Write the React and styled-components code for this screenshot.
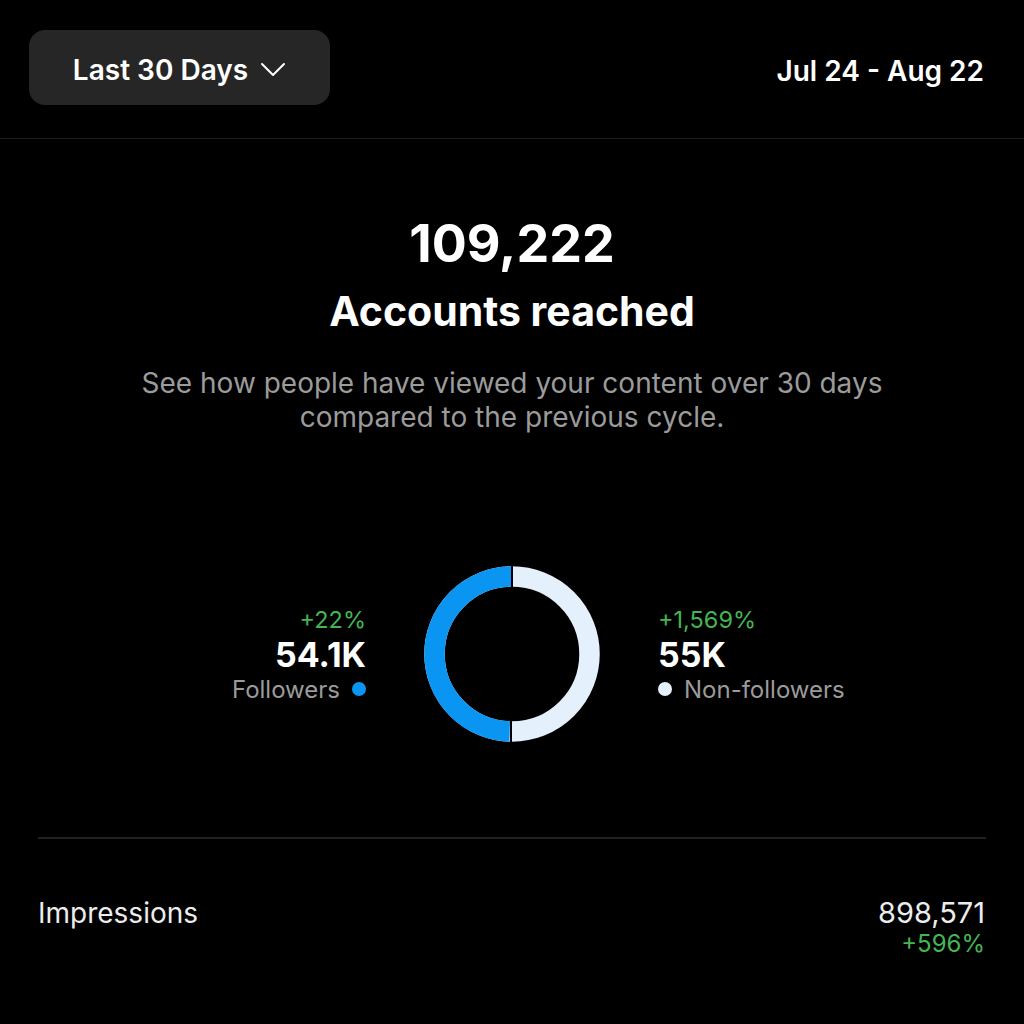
import React from "react"
import styled, { createGlobalStyle } from "styled-components"

const GlobalStyle = createGlobalStyle`
  html, body {
    margin: 0;
    padding: 0;
    background: #000;
  }
  body {
    font-family: Inter, "Noto Sans", "Liberation Sans", sans-serif;
    color: #fff;
  }
`

const Ring = ({ share }) => {
  const r = 77.5
  const c = 2 * Math.PI * r
  const blue = c * share
  return (
    <svg width="176" height="176" viewBox="0 0 176 176">
      <g transform="rotate(-90 88 88)">
        <circle cx="88" cy="88" r={r} fill="none" stroke="#e4f0fc" strokeWidth="20.5" />
        <circle
          cx="88"
          cy="88"
          r={r}
          fill="none"
          stroke="#0a95f2"
          strokeWidth="20.5"
          strokeDasharray={`${blue} ${c}`}
          strokeDashoffset={-(c - blue)}
        />
      </g>
      <line x1="88" y1="0" x2="88" y2="22" stroke="#000" strokeWidth="2" />
      <line x1="87" y1="154" x2="87" y2="176" stroke="#000" strokeWidth="2" />
    </svg>
  )
}

const Chevron = () => (
  <svg width="26" height="15" viewBox="0 0 26 15" fill="none">
    <path d="M2 2l11 11L24 2" stroke="#fff" strokeWidth="2" strokeLinecap="round" strokeLinejoin="round" />
  </svg>
)

const App = () => {
  return (
    <>
      <GlobalStyle />
      <Page>
        <Header>
          <RangeButton>
            Last 30 Days
            <Chevron />
          </RangeButton>
          <DateRange>Jul 24 - Aug 22</DateRange>
        </Header>

        <Hero>
          <BigNumber>109,222</BigNumber>
          <HeroTitle>Accounts reached</HeroTitle>
          <Description>
            See how people have viewed your content over 30 days
            <br />
            compared to the previous cycle.
          </Description>
        </Hero>

        <Breakdown>
          <Stat $side="left">
            <Change>+22%</Change>
            <StatValue>54.1K</StatValue>
            <StatLabel>
              Followers
              <Dot $color="#0a95f2" />
            </StatLabel>
          </Stat>
          <Ring share={0.496} />
          <Stat $side="right">
            <Change>+1,569%</Change>
            <StatValue>55K</StatValue>
            <StatLabel>
              <Dot $color="#e4f0fc" />
              Non-followers
            </StatLabel>
          </Stat>
        </Breakdown>

        <Divider />

        <MetricRow>
          <MetricName>Impressions</MetricName>
          <MetricValues>
            <MetricValue>898,571</MetricValue>
            <MetricChange>+596%</MetricChange>
          </MetricValues>
        </MetricRow>
      </Page>
    </>
  )
}

const Page = styled.div`
  width: 1024px;
  height: 1024px;
  background: #000;
  overflow: hidden;
`

const Header = styled.div`
  height: 139px;
  box-sizing: border-box;
  padding: 30px 40px 0 29px;
  display: flex;
  align-items: flex-start;
  justify-content: space-between;
  border-bottom: 1px solid #1c1c1c;
`

const RangeButton = styled.div`
  width: 301px;
  height: 75px;
  box-sizing: border-box;
  border-radius: 16px;
  background: #262626;
  display: flex;
  align-items: center;
  justify-content: center;
  gap: 12px;
  font-size: 28px;
  font-weight: 600;
  padding-top: 4px;
`

const DateRange = styled.div`
  font-size: 28px;
  font-weight: 600;
  line-height: 75px;
  padding-top: 4px;
`

const Hero = styled.div`
  display: flex;
  flex-direction: column;
  align-items: center;
  text-align: center;
  padding-top: 75px;
`

const BigNumber = styled.div`
  font-size: 52px;
  font-weight: 700;
  line-height: 60px;
`

const HeroTitle = styled.div`
  font-size: 41px;
  font-weight: 700;
  line-height: 48px;
  margin-top: 13px;
`

const Description = styled.div`
  font-size: 28px;
  line-height: 34px;
  color: #9b9b9b;
  margin-top: 31px;
`

const Breakdown = styled.div`
  display: grid;
  grid-template-columns: 1fr auto 1fr;
  align-items: center;
  column-gap: 58px;
  margin-top: 132px;
`

const Stat = styled.div`
  display: flex;
  flex-direction: column;
  align-items: ${(p) => (p.$side === "left" ? "flex-end" : "flex-start")};
`

const Change = styled.div`
  font-size: 23.5px;
  line-height: 35px;
  color: #45b553;
`

const StatValue = styled.div`
  font-size: 34px;
  font-weight: 700;
  line-height: 35px;
`

const StatLabel = styled.div`
  display: flex;
  align-items: center;
  gap: 12px;
  font-size: 24px;
  line-height: 35px;
  color: #9b9b9b;
`

const Dot = styled.span`
  width: 14px;
  height: 14px;
  border-radius: 50%;
  background: ${(p) => p.$color};
`

const Divider = styled.div`
  height: 2px;
  background: #222;
  margin: 95px 38px 0;
`

const MetricRow = styled.div`
  display: flex;
  justify-content: space-between;
  align-items: flex-start;
  padding: 56px 39px 0 38px;
`

const MetricName = styled.div`
  font-size: 28px;
  line-height: 36px;
  color: #ececec;
`

const MetricValues = styled.div`
  display: flex;
  flex-direction: column;
  align-items: flex-end;
`

const MetricValue = styled.div`
  font-size: 29px;
  line-height: 36px;
  color: #ececec;
`

const MetricChange = styled.div`
  font-size: 24px;
  line-height: 26px;
  color: #45b553;
`

export default App
